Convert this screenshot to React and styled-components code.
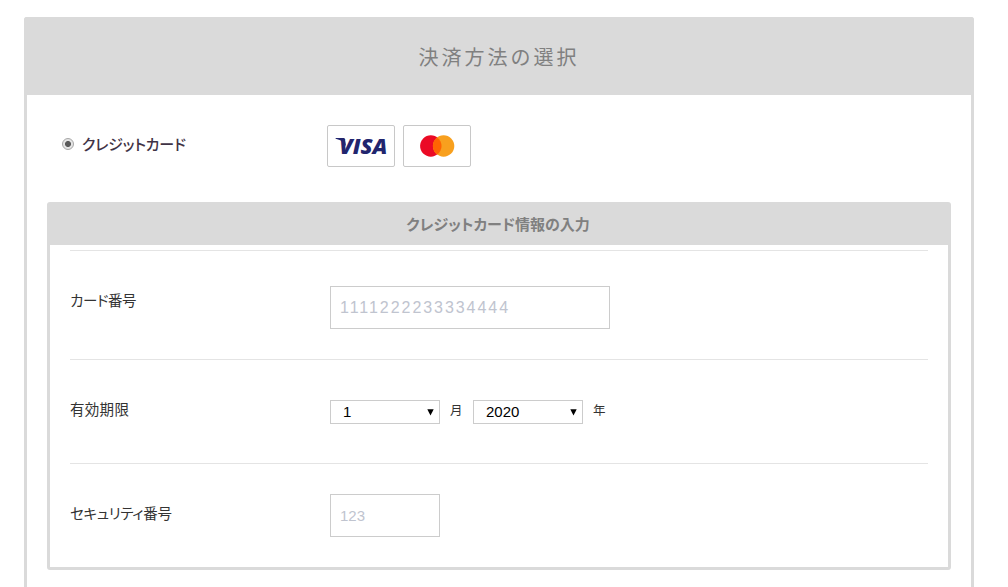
import React, { useState } from "react";
import styled, { createGlobalStyle } from "styled-components";

const months = Array.from({ length: 12 }, (_, i) => i + 1);
const years = Array.from({ length: 10 }, (_, i) => 2020 + i);

function VisaLogo() {
  return (
    <svg width='66' height='40' viewBox='0 0 66 40' role='img' aria-label='VISA'>
      <path d='M7.6 12.1H16.5L18.2 20.5C15.6 15.6 12.2 13.6 7.6 12.7Z' fill='#21256e' />
      <text
        x='11.2'
        y='27.8'
        textLength='48.2'
        lengthAdjust='spacingAndGlyphs'
        fontFamily='"Open Sans", sans-serif'
        fontSize='21.8'
        fontWeight='800'
        fontStyle='italic'
        fill='#21256e'
      >
        VISA
      </text>
    </svg>
  );
}

function MastercardLogo() {
  return (
    <svg width='66' height='40' viewBox='0 0 66 40'>
      <circle cx='26.8' cy='20' r='10.7' fill='#eb0a25' />
      <circle cx='39.6' cy='20' r='10.7' fill='#f8a01e' />
      <path d='M33.2 11.4A10.7 10.7 0 0 1 33.2 28.6A10.7 10.7 0 0 1 33.2 11.4Z' fill='#ff6402' />
    </svg>
  );
}

function Select({ options, name }) {
  const [value, setValue] = useState(options[0]);

  return (
    <SelectBox>
      <select name={name} value={value} onChange={(e) => setValue(e.target.value)}>
        {options.map((item) => (
          <option key={item} value={item}>
            {item}
          </option>
        ))}
      </select>
      <svg width='7' height='7' viewBox='0 0 7 7'>
        <path d='M0.3 0.3H6.7L3.5 6.6Z' fill='#000' />
      </svg>
    </SelectBox>
  );
}

function App() {
  return (
    <>
      <GlobalStyle />
      <Panel>
        <PanelTitle>決済方法の選択</PanelTitle>
        <Method>
          <MethodLabel>
            <Radio type='radio' name='method' defaultChecked />
            <MethodName>クレジットカード</MethodName>
          </MethodLabel>
          <Brands>
            <Brand>
              <VisaLogo />
            </Brand>
            <Brand>
              <MastercardLogo />
            </Brand>
          </Brands>
        </Method>

        <CardPanel>
          <CardTitle>クレジットカード情報の入力</CardTitle>
          <Row $height='109px' $top='36px'>
            <Label $top='4px' $spacing='-0.4px'>カード番号</Label>
            <NumberInput type='text' placeholder='1111222233334444' />
          </Row>
          <Row $height='104px' $top='41px'>
            <Label $top='0' $spacing='0.3px' $line='20px'>有効期限</Label>
            <Expiry>
              <Select name='month' options={months} />
              <Unit>月</Unit>
              <Select name='year' options={years} />
              <Unit>年</Unit>
            </Expiry>
          </Row>
          <Row $height='104px' $top='31px'>
            <Label $top='9px' $spacing='-0.3px'>セキュリティ番号</Label>
            <CodeInput type='text' placeholder='123' />
          </Row>
        </CardPanel>
      </Panel>
    </>
  );
}

const GlobalStyle = createGlobalStyle`
  * {
    box-sizing: border-box;
  }
  body {
    margin: 0;
    background: #fff;
    color: #333;
    font-family: "Liberation Sans", "Noto Sans CJK JP", sans-serif;
    font-size: 15px;
  }
`;

const Panel = styled.section`
  width: 950px;
  height: 570px;
  margin: 17px 0 0 24px;
  border: 3px solid #dadada;
  border-bottom: 0;
  border-radius: 3px 3px 0 0;
`;

const PanelTitle = styled.h2`
  height: 75px;
  margin: 0;
  background: #dadada;
  color: #808080;
  font-size: 20px;
  font-weight: 400;
  line-height: 76px;
  letter-spacing: 3px;
  text-align: center;
`;

const Method = styled.div`
  display: flex;
  height: 107px;
  padding: 30px 0 0 35px;
`;

const MethodLabel = styled.label`
  display: flex;
  align-items: center;
  gap: 8px;
  width: 265px;
  height: 38px;
`;

const Radio = styled.input`
  appearance: none;
  width: 12px;
  height: 12px;
  margin: 0;
  border: 1px solid #a6a6a6;
  border-radius: 50%;
  background: radial-gradient(circle, #5a5a5a 0 2.6px, #e4e4e4 3.4px);
`;

const MethodName = styled.span`
  padding-bottom: 2px;
  color: #3f3345;
  font-weight: 500;
  font-feature-settings: "palt";
  letter-spacing: -0.2px;
`;

const Brands = styled.div`
  display: flex;
  gap: 8px;
`;

const Brand = styled.div`
  width: 68px;
  height: 42px;
  border: 1px solid #c8c8c8;
  border-radius: 2px;

  svg {
    display: block;
  }
`;

const CardPanel = styled.div`
  height: 368px;
  margin: 0 20px;
  border: 3px solid #dadada;
  border-radius: 3px;
`;

const CardTitle = styled.h3`
  height: 40px;
  margin: 0 0 5px;
  padding-right: 2px;
  background: #dadada;
  color: #808080;
  font-size: 15px;
  font-weight: 700;
  line-height: 39px;
  text-align: center;
  font-feature-settings: "palt";
`;

const Row = styled.div`
  display: flex;
  align-items: flex-start;
  height: ${({ $height }) => $height};
  margin: 0 20px;
  padding-top: ${({ $top }) => `calc(${$top} - 1px)`};
  border-top: 1px solid #e4e4e4;
`;

const Label = styled.span`
  width: 260px;
  padding-top: ${({ $top }) => $top};
  font-size: 14.5px;
  line-height: ${({ $line }) => $line || "22px"};
  font-feature-settings: "palt";
  letter-spacing: ${({ $spacing }) => $spacing};
`;

const Input = styled.input`
  height: 43px;
  padding: 0 9px;
  border: 1px solid #ccc;
  border-radius: 0;
  font-family: "Liberation Sans", sans-serif;

  &::placeholder {
    color: #c0c4cf;
  }
`;

const NumberInput = styled(Input)`
  width: 280px;
  font-size: 16px;
  letter-spacing: 1.95px;
`;

const CodeInput = styled(Input)`
  width: 110px;
  font-size: 15px;
`;

const Expiry = styled.div`
  display: flex;
  align-items: center;
`;

const Unit = styled.span`
  width: 33px;
  padding: 0 0 2px 10px;
  font-size: 12.5px;
  line-height: 20px;
`;

const SelectBox = styled.div`
  position: relative;
  width: 110px;
  height: 24px;

  select {
    appearance: none;
    display: block;
    width: 100%;
    height: 100%;
    padding: 0 12px 1px;
    border: 1px solid #ccc;
    border-radius: 0;
    background: #fff;
    color: #000;
    font-family: "Liberation Sans", sans-serif;
    font-size: 15px;
  }
  svg {
    position: absolute;
    top: 9px;
    right: 6px;
    pointer-events: none;
  }
`;

export default App;
